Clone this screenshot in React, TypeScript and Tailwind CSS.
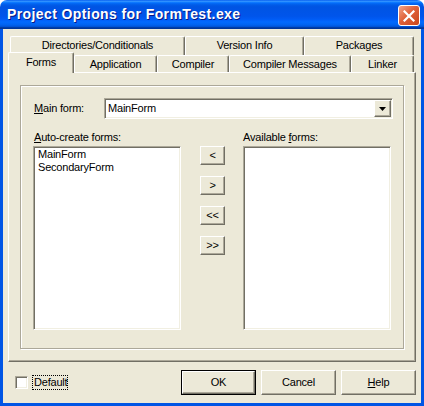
import React from "react";

const raised =
  "bg-[#ECE9D8] border-t border-l border-t-white border-l-white border-r border-b border-r-[#716F64] border-b-[#716F64] shadow-[inset_-1px_-1px_0_#ACA899]";
const sunken =
  "bg-white border-t border-l border-t-[#ACA899] border-l-[#ACA899] border-r border-b border-r-white border-b-white shadow-[inset_1px_1px_0_#716F64,inset_-1px_-1px_0_#F1EFE2]";

function Tab({ label, cls }: { label: string; cls: string }) {
  return (
    <div
      className={
        "flex items-center justify-center bg-[#ECE9D8] border-l border-t border-l-white border-t-white border-r border-r-[#716F64] rounded-t-[2px] shadow-[inset_-1px_0_0_#ACA899] " +
        cls
      }
    >
      {label}
    </div>
  );
}

function Btn({ children, cls }: { children: React.ReactNode; cls: string }) {
  return (
    <div className={"flex items-center justify-center " + raised + " " + cls}>
      {children}
    </div>
  );
}

export default function App() {
  return (
    <div className="w-[424px] h-[406px] flex flex-col bg-white font-['Liberation_Sans',Arial,sans-serif] text-[11px] leading-[13px] text-black tracking-[-0.2px]">
      {/* Title bar */}
      <div className="h-[29px] shrink-0 rounded-t-[7px] flex items-start bg-[linear-gradient(180deg,#0058EE_0%,#3593FF_4%,#288EFF_6%,#127DFF_8%,#036FFC_10%,#0262EE_14%,#0057E5_20%,#0054E3_24%,#0055EB_56%,#005BF5_66%,#026AFE_76%,#0062EF_86%,#0052D6_92%,#0040AB_94%,#003092_100%)]">
        <div className="pl-[7px] pt-[6px] text-white font-bold text-[14px] leading-[17px] tracking-[0.4px] [text-shadow:1px_1px_0_#0A1883]">
          Project Options for FormTest.exe
        </div>
        <div className="ml-auto mr-[4px] mt-[5px] w-[22px] h-[21px] rounded-[3px] border border-white bg-[linear-gradient(135deg,#F2A48A_0%,#E0623A_45%,#C9451A_100%)] flex items-center justify-center">
          <svg width="12" height="12" viewBox="0 0 12 12">
            <path d="M1.5 1.5 L10.5 10.5 M10.5 1.5 L1.5 10.5" stroke="#fff" strokeWidth="2.2" strokeLinecap="square" />
          </svg>
        </div>
      </div>

      {/* Body */}
      <div className="flex-1 flex flex-col bg-[#ECE9D8] border-x-[3px] border-b-[3px] border-[#0055E5] px-[5px] pt-[7px]">
        {/* Tabs row 1 */}
        <div className="flex pl-[2px] h-[19px]">
          <Tab label="Directories/Conditionals" cls="w-[175px] h-[19px] pb-[2px]" />
          <Tab label="Version Info" cls="w-[119px] h-[19px] pb-[2px]" />
          <Tab label="Packages" cls="w-[110px] h-[19px] pb-[2px]" />
        </div>
        {/* Tabs row 2 */}
        <div className="flex items-end h-[17px] relative z-10">
          <Tab label="Forms" cls="w-[66px] h-[21px] -mb-[1px] pb-[1px]" />
          <Tab label="Application" cls="w-[83px] h-[17px]" />
          <Tab label="Compiler" cls="w-[72px] h-[17px]" />
          <Tab label="Compiler Messages" cls="w-[122px] h-[17px]" />
          <Tab label="Linker" cls="w-[63px] h-[17px]" />
        </div>

        {/* Panel */}
        <div className="w-[408px] h-[290px] border-l border-t border-l-white border-t-white border-r border-b border-r-[#716F64] border-b-[#716F64] shadow-[inset_-1px_-1px_0_#ACA899] pl-[11px] pt-[12px]">
          <div className="w-[384px] h-[264px] border border-[#ACA899] shadow-[inset_1px_1px_0_#fff,1px_1px_0_#fff] pl-[12px] pt-[12px]">
            {/* Main form row */}
            <div className="flex items-center h-[21px]">
              <div className="w-[71px] pl-[1px]">
                <span className="underline underline-offset-[1px]">M</span>ain form:
              </div>
              <div className={"w-[289px] h-[21px] flex items-center " + sunken}>
                <div className="flex-1 pl-[3px]">MainForm</div>
                <div className={"w-[17px] h-[17px] mr-[1px] flex items-center justify-center " + raised}>
                  <svg width="7" height="4" viewBox="0 0 7 4">
                    <path d="M0 0 H7 L3.5 4 Z" fill="#000" />
                  </svg>
                </div>
              </div>
            </div>

            {/* Lists */}
            <div className="flex mt-[12px]">
              <div className="w-[148px] flex flex-col">
                <div className="h-[13px] pl-[1px] mb-[2px]">
                  <span className="underline underline-offset-[1px]">A</span>uto-create forms:
                </div>
                <div className={"h-[184px] pl-[2px] pt-[1px] " + sunken}>
                  <div className="pl-[2px] h-[13px]">MainForm</div>
                  <div className="pl-[2px] h-[13px]">SecondaryForm</div>
                </div>
              </div>
              <div className="w-[25px] ml-[19px] pt-[15px] flex flex-col gap-[11px]">
                <Btn cls="w-[25px] h-[19px]">&lt;</Btn>
                <Btn cls="w-[25px] h-[19px]">&gt;</Btn>
                <Btn cls="w-[25px] h-[19px]">&lt;&lt;</Btn>
                <Btn cls="w-[25px] h-[19px]">&gt;&gt;</Btn>
              </div>
              <div className="w-[148px] ml-[18px] flex flex-col">
                <div className="h-[13px] mb-[2px]">
                  Available <span className="underline underline-offset-[1px]">f</span>orms:
                </div>
                <div className={"h-[184px] " + sunken}></div>
              </div>
            </div>
          </div>
        </div>

        {/* Bottom row */}
        <div className="flex items-center mt-[8px] h-[25px]">
          <div className={"ml-[7px] w-[13px] h-[13px] " + sunken}></div>
          <div className="ml-[4px] h-[15px] px-[1px] flex items-center outline outline-1 outline-dotted outline-black -outline-offset-1 pl-[2px] pr-[1px]">
            Default
          </div>
          <div className="ml-auto flex gap-[5px]">
            <div className="w-[75px] h-[25px] border border-black">
              <Btn cls="w-full h-full">OK</Btn>
            </div>
            <Btn cls="w-[75px] h-[25px]">Cancel</Btn>
            <Btn cls="w-[75px] h-[25px]">
              <span>
                <span className="underline underline-offset-[1px]">H</span>elp
              </span>
            </Btn>
          </div>
        </div>
      </div>
    </div>
  );
}
